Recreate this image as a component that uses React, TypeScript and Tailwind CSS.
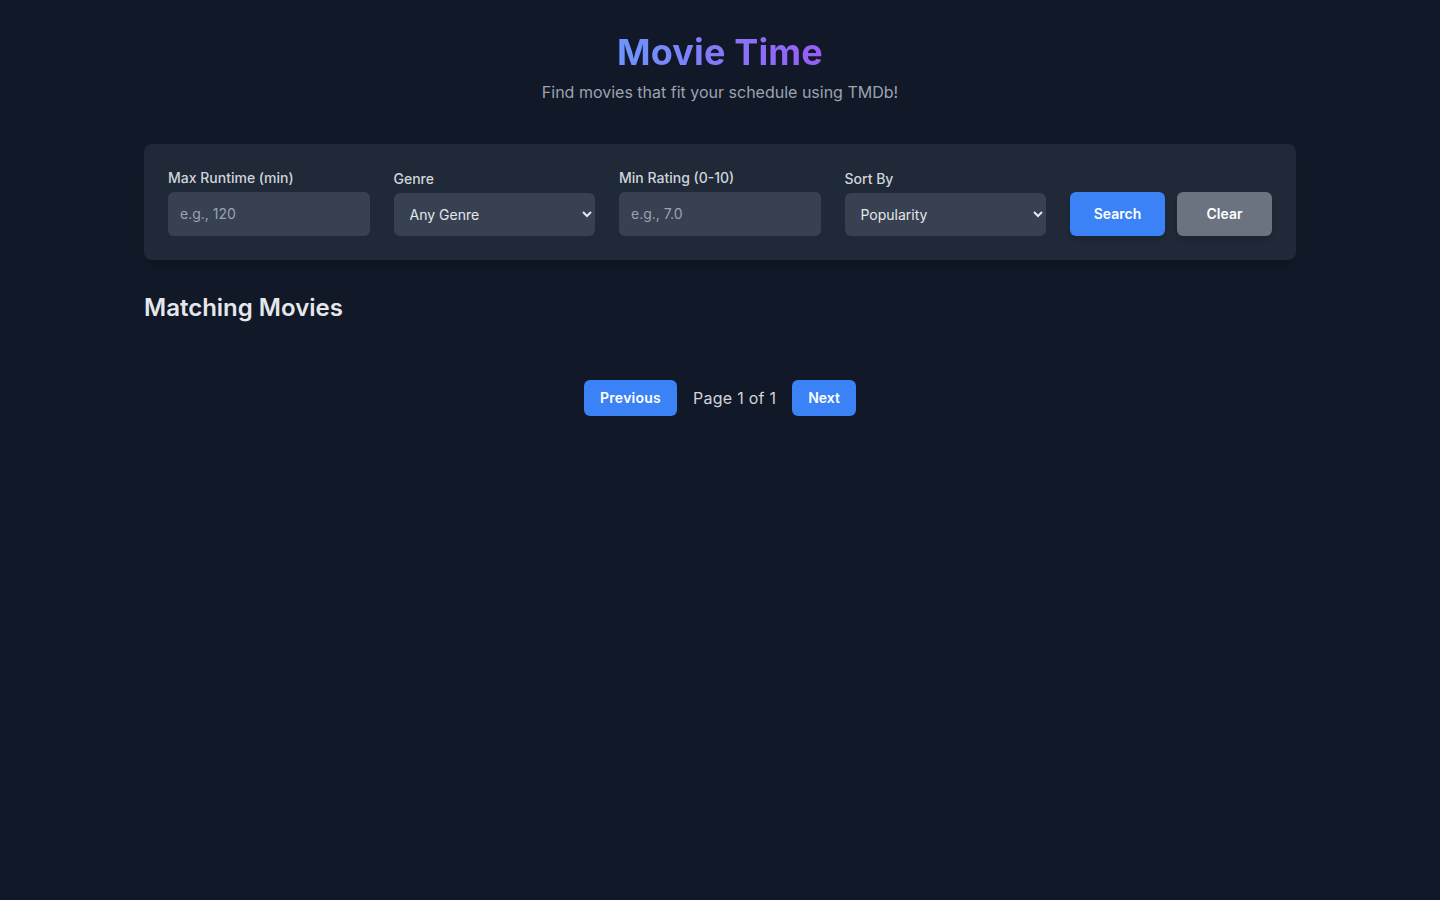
const App = () => {
  return (
    <div className="min-h-screen bg-[#111827] text-[#e5e7eb] font-['Inter',sans-serif] antialiased">
      <div className="mx-auto max-w-6xl py-8">
        <header className="mb-10 text-center">
          <h1 className="mx-auto w-fit bg-[linear-gradient(to_right,#6d95ff,#9a5cf5)] bg-clip-text text-4xl font-bold tracking-[0.15px] text-transparent">
            Movie Time
          </h1>
          <p className="mt-2 text-[#9ca3af]">Find movies that fit your schedule using TMDb!</p>
        </header>

        <section className="mb-8 flex items-end gap-6 rounded-lg bg-[#1f2937] p-6 shadow-lg">
          <div className="flex-1">
            <label htmlFor="runtime" className="mb-1 block text-sm font-medium text-[#d1d5db]">Max Runtime (min)</label>
            <input
              id="runtime"
              type="number"
              placeholder="e.g., 120"
              className="w-full rounded-md bg-[#374151] px-3 py-3 text-sm text-white placeholder:text-[#9ca3af]"
            />
          </div>
          <div className="flex-1">
            <label htmlFor="genre" className="mb-1 block text-sm font-medium text-[#d1d5db]">Genre</label>
            <select id="genre" className="w-full rounded-md bg-[#374151] px-3 py-3 text-sm text-[#e5e7eb]">
              <option>Any Genre</option>
            </select>
          </div>
          <div className="flex-1">
            <label htmlFor="rating" className="mb-1 block text-sm font-medium text-[#d1d5db]">Min Rating (0-10)</label>
            <input
              id="rating"
              type="number"
              placeholder="e.g., 7.0"
              className="w-full rounded-md bg-[#374151] px-3 py-3 text-sm text-white placeholder:text-[#9ca3af]"
            />
          </div>
          <div className="flex-1">
            <label htmlFor="sort" className="mb-1 block text-sm font-medium text-[#d1d5db]">Sort By</label>
            <select id="sort" className="w-full rounded-md bg-[#374151] px-3 py-3 text-sm text-[#e5e7eb]">
              <option>Popularity</option>
            </select>
          </div>
          <div className="grid w-[202px] grid-cols-2 gap-3">
            <button className="rounded-md bg-[#3b82f6] py-3 text-sm font-semibold text-white shadow-md">Search</button>
            <button className="rounded-md bg-[#6b7280] py-3 text-sm font-semibold text-white shadow-md">Clear</button>
          </div>
        </section>

        <h2 className="mb-14 text-2xl font-semibold text-[#e5e7eb]">Matching Movies</h2>

        <div className="flex items-center justify-center gap-4">
          <button className="rounded-md bg-[#3b82f6] px-4 py-2 text-sm font-semibold tracking-[0.25px] text-white">Previous</button>
          <span className="tracking-[0.25px] text-[#d1d5db]">Page 1 of 1</span>
          <button className="rounded-md bg-[#3b82f6] px-4 py-2 text-sm font-semibold text-white">Next</button>
        </div>
      </div>
    </div>
  );
};

export default App;
